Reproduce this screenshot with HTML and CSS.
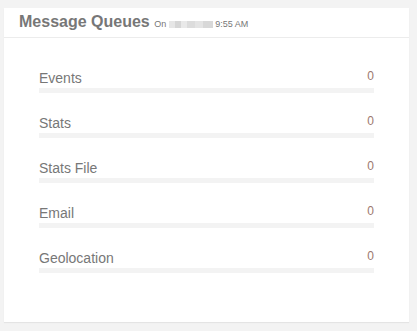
FILE: index.html
```html
<!DOCTYPE html>
<html>
	<head>
		<meta charset="UTF-8">
		<title>Message Queues</title>
		<link rel="stylesheet" href="styles.css">
	</head>

	<body>
		<div class="panel">
			<div class="panelHead">
				<span class="title">Message Queues</span>
				<span class="stamp">On <span class="blur"></span> 9:55 AM</span>
			</div>

			<ul class="queueList">
				<li>
					<div class="row"><span class="name">Events</span><span class="count">0</span></div>
					<div class="bar"></div>
				</li>
				<li>
					<div class="row"><span class="name">Stats</span><span class="count">0</span></div>
					<div class="bar"></div>
				</li>
				<li>
					<div class="row"><span class="name">Stats File</span><span class="count">0</span></div>
					<div class="bar"></div>
				</li>
				<li>
					<div class="row"><span class="name">Email</span><span class="count">0</span></div>
					<div class="bar"></div>
				</li>
				<li>
					<div class="row"><span class="name">Geolocation</span><span class="count">0</span></div>
					<div class="bar"></div>
				</li>
			</ul>
		</div>
	</body>
</html>
```

FILE: styles.css
```css
*{
	margin: 0;
	padding: 0;
}
ul,li{
	list-style: none;
}

html,body{
	height: 100%;
	overflow: hidden;
}

body{
	background-color: #f3f3f3;
	font-family: "Liberation Sans", Arial, sans-serif;
	color: #777;
	padding: 8px 8px 0 4px;
}

.panel{
	width: 405px;
	background-color: #fff;
	box-shadow: 0 1px 1px rgba(0,0,0,0.06);
}

.panel .panelHead{
	height: 20px;
	padding: 4px 15px 5px 15px;
	border-bottom: 1px solid #ececec;
	line-height: 20px;
	white-space: nowrap;
}

.panel .title{
	font-size: 16px;
	font-weight: bold;
	color: #777;
}

.panel .stamp{
	font-size: 9px;
	color: #777;
}

.panel .stamp .blur{
	display: inline-block;
	width: 44px;
	height: 7px;
	vertical-align: -0.5px;
	background: linear-gradient(90deg, #e6e6e6 0, #e6e6e6 6px, #d6d6d6 6px, #d6d6d6 12px, #e9e9e9 12px, #e9e9e9 18px, #dcdcdc 18px, #dcdcdc 26px, #e4e4e4 26px, #e4e4e4 34px, #d8d8d8 34px);
}

.queueList{
	padding: 29px 35px 49px 35px;
}

.queueList li{
	margin-bottom: 19px;
}

.queueList li:last-child{
	margin-bottom: 0;
}

.queueList .row{
	display: flex;
	justify-content: space-between;
	align-items: flex-start;
}

.queueList .name{
	padding-top: 1px;
	font-size: 14px;
	line-height: 20px;
	color: #777;
}

.queueList .count{
	font-size: 12px;
	line-height: 18px;
	color: #9c776e;
}

.queueList .bar{
	height: 5px;
	background-color: #f3f3f3;
}
```
